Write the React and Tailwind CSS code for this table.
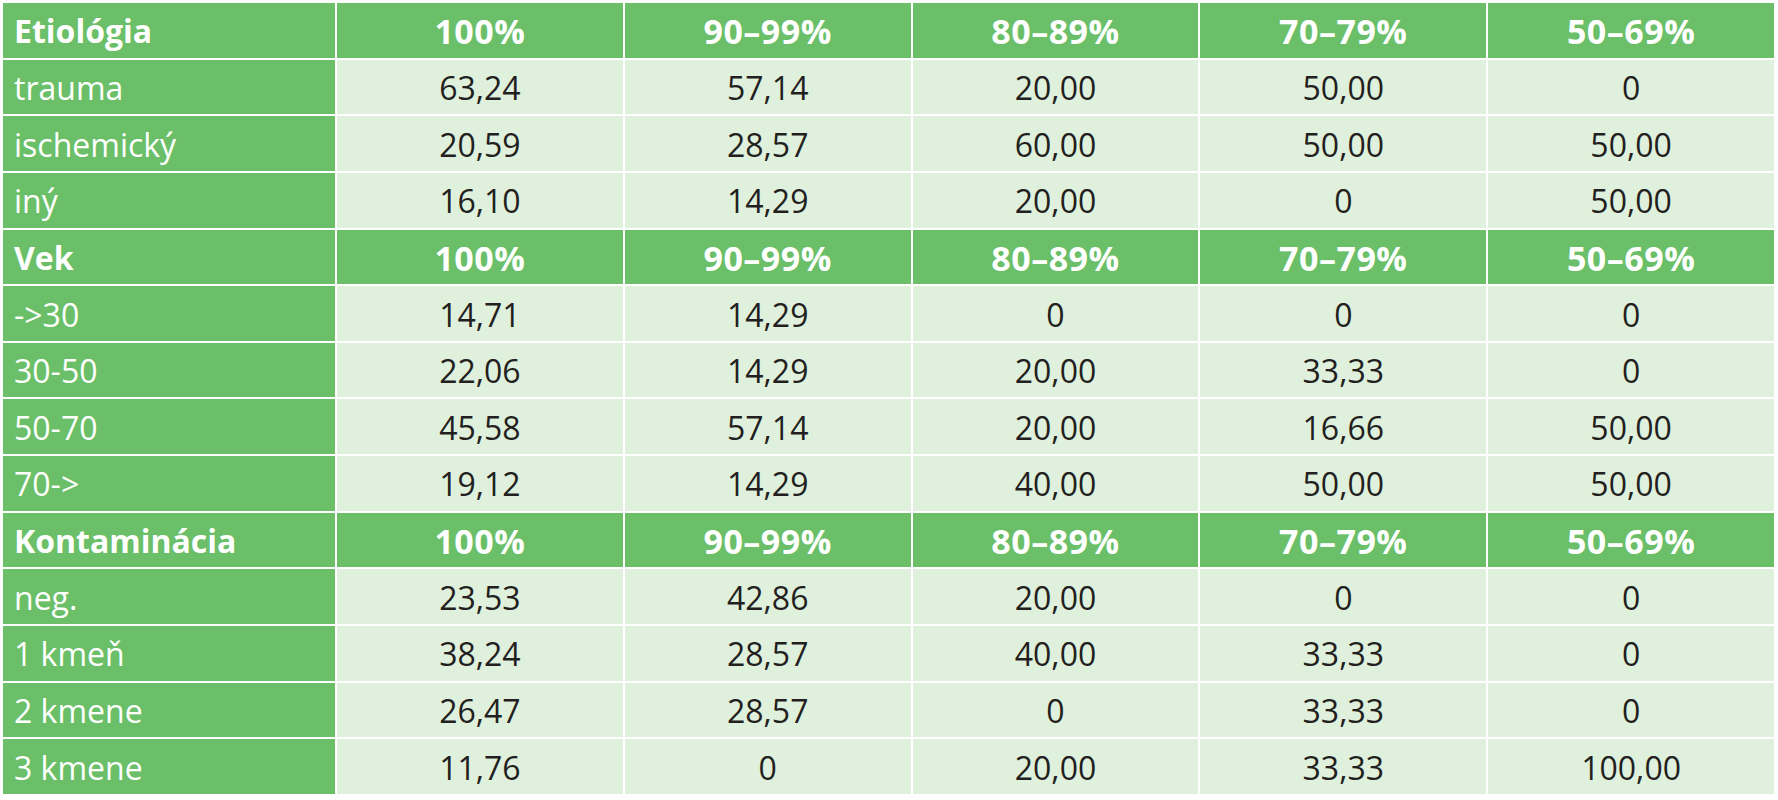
import React from "react";

const headers = ["100%", "90–99%", "80–89%", "70–79%", "50–69%"];

const sections = [
  {
    title: "Etiológia",
    rows: [
      ["trauma", "63,24", "57,14", "20,00", "50,00", "0"],
      ["ischemický", "20,59", "28,57", "60,00", "50,00", "50,00"],
      ["iný", "16,10", "14,29", "20,00", "0", "50,00"],
    ],
  },
  {
    title: "Vek",
    rows: [
      ["->30", "14,71", "14,29", "0", "0", "0"],
      ["30-50", "22,06", "14,29", "20,00", "33,33", "0"],
      ["50-70", "45,58", "57,14", "20,00", "16,66", "50,00"],
      ["70->", "19,12", "14,29", "40,00", "50,00", "50,00"],
    ],
  },
  {
    title: "Kontaminácia",
    rows: [
      ["neg.", "23,53", "42,86", "20,00", "0", "0"],
      ["1 kmeň", "38,24", "28,57", "40,00", "33,33", "0"],
      ["2 kmene", "26,47", "28,57", "0", "33,33", "0"],
      ["3 kmene", "11,76", "0", "20,00", "33,33", "100,00"],
    ],
  },
];

export default function App() {
  const cells = [];
  sections.forEach((s, si) => {
    cells.push(
      <div key={`h-${si}`} className="bg-[#6abf68] text-white font-bold text-[32px] flex items-center pl-[11px] pt-[2px]">
        {s.title}
      </div>
    );
    headers.forEach((h, hi) => {
      cells.push(
        <div key={`h-${si}-${hi}`} className="bg-[#6abf68] text-white font-bold text-[34px] tracking-[0.5px] flex items-center justify-center pt-[2px]">
          {h}
        </div>
      );
    });
    s.rows.forEach((r, ri) => {
      r.forEach((c, ci) =>
        cells.push(
          ci === 0 ? (
            <div key={`r-${si}-${ri}-${ci}`} className="bg-[#6abf68] text-white flex items-center pl-[11px] pt-[2px]">
              {c}
            </div>
          ) : (
            <div key={`r-${si}-${ri}-${ci}`} className="bg-[#dff0dc] text-[#231f20] flex items-center justify-center pt-[2px]">
              {c}
            </div>
          )
        )
      );
    });
  });

  return (
    <div className="w-[1778px] h-[800px] bg-white pt-[3px] pl-[3px]" style={{ fontFamily: '"Open Sans", "Noto Sans", sans-serif' }}>
      <div className="grid grid-cols-[332px_repeat(5,1fr)] grid-rows-[repeat(14,1fr)] gap-[2px] w-[1771px] h-[791px] text-[32px] leading-none">
        {cells}
      </div>
    </div>
  );
}
